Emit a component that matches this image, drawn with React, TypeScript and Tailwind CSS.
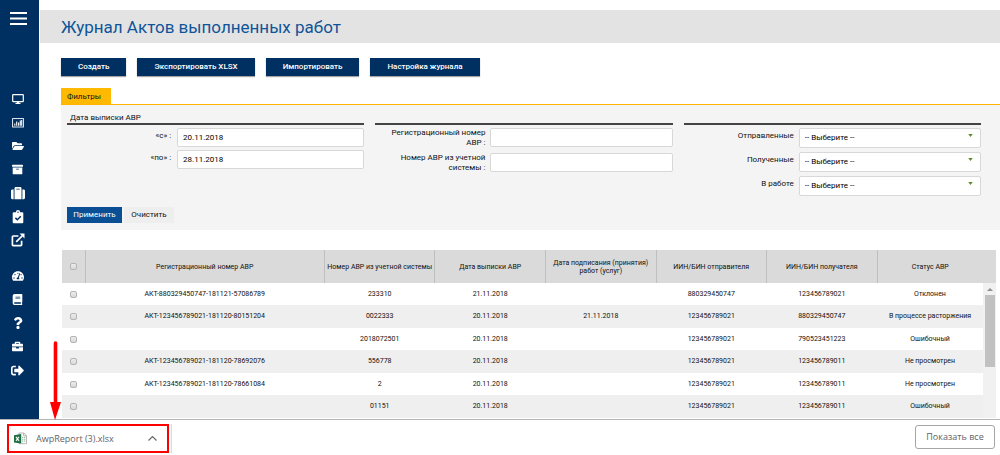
import type { ReactNode } from "react";
import {
  FaFolderOpen,
  FaArchive,
  FaSuitcase,
  FaTachometerAlt,
  FaBook,
  FaQuestion,
  FaBriefcase,
  FaSignOutAlt,
} from "react-icons/fa";

const rows = [
  ["АКТ-880329450747-181121-57086789", "233310", "21.11.2018", "", "880329450747", "123456789021", "Отклонен"],
  ["АКТ-123456789021-181120-80151204", "0022333", "20.11.2018", "21.11.2018", "123456789021", "880329450747", "В процессе расторжения"],
  ["", "2018072501", "20.11.2018", "", "123456789021", "790523451223", "Ошибочный"],
  ["АКТ-123456789021-181120-78692076", "556778", "20.11.2018", "", "123456789021", "123456789011", "Не просмотрен"],
  ["АКТ-123456789021-181120-78661084", "2", "20.11.2018", "", "123456789021", "123456789011", "Не просмотрен"],
  ["", "01151", "20.11.2018", "", "123456789021", "123456789011", "Ошибочный"],
];

const columns = [
  { title: "Регистрационный номер АВР", width: "w-[26%]" },
  { title: "Номер АВР из учетной системы", width: "w-[12%]" },
  { title: "Дата выписки АВР", width: "w-[12%]" },
  { title: "Дата подписания (принятия) работ (услуг)", width: "w-[12%]" },
  { title: "ИИН/БИН отправителя", width: "w-[12%]" },
  { title: "ИИН/БИН получателя", width: "w-[12%]" },
  { title: "Статус АВР", width: "" },
];

const MonitorIcon = () => (
  <svg viewBox="0 0 12 12" className="size-3" fill="none" stroke="currentColor">
    <rect x="0.7" y="1.7" width="10.6" height="7" rx="0.6" strokeWidth="1.2" />
    <path d="M3.5 10.4h5M5 9.4h2" strokeWidth="1.2" />
  </svg>
);

const ChartIcon = () => (
  <svg viewBox="0 0 12 12" className="size-3" fill="none" stroke="currentColor">
    <rect x="0.6" y="1.6" width="10.8" height="8.4" strokeWidth="0.9" />
    <path d="M2.8 8.8V6.6M4.7 8.8V4.6M6.6 8.8V5.6M8.3 8.8V3.6M9.7 8.8V3" strokeWidth="1.1" />
  </svg>
);

const ClipboardIcon = () => (
  <svg viewBox="0 0 12 14" className="h-3.5 w-3">
    <path
      fill="currentColor"
      d="M1.7 2.2h2.2a2.1 2.1 0 0 1 4.2 0h2.2q1 0 1 1v9q0 1-1 1H1.7q-1 0-1-1v-9q0-1 1-1z"
    />
    <circle cx="6" cy="2.3" r="0.7" fill="#003061" />
    <path d="M3.4 7.9l1.9 1.9 3.5-3.5" fill="none" stroke="#003061" strokeWidth="1.5" />
  </svg>
);

const ShareIcon = () => (
  <svg viewBox="0 0 14 14" className="size-3.5" fill="none" stroke="currentColor">
    <path d="M7.4 3H2.2q-.8 0-.8.8v8q0 .8.8.8h7.6q.8 0 .8-.8V7.8" strokeWidth="1.7" />
    <path d="M5.2 8.8l6-6" strokeWidth="1.7" />
    <path d="M8.6.6h4.9v4.9z" fill="currentColor" stroke="none" />
  </svg>
);

const ExcelIcon = () => (
  <svg viewBox="0 0 13 14" className="h-3.5 w-[13px] shrink-0">
    <path d="M5 1h4.8l2.7 2.7v8H5z" fill="#fff" stroke="#a5a5a5" strokeWidth="0.8" />
    <path d="M9.6 1v2.8h2.9" fill="none" stroke="#a5a5a5" strokeWidth="0.8" />
    <path d="M8 5.4h1.4M10 5.4h1.4M8 7.2h1.4M10 7.2h1.4M8 9h1.4M10 9h1.4" stroke="#7fb596" strokeWidth="0.9" />
    <path d="M0 3.2L7.2 2v9.4L0 10.4z" fill="#1d7044" />
    <path d="M2 4.9l3 3.9M5 4.9L2 8.8" stroke="#fff" strokeWidth="1.1" />
  </svg>
);

const mainNav: [string, ReactNode][] = [
  ["Рабочий стол", <MonitorIcon />],
  ["Статистика", <ChartIcon />],
  ["Документы", <FaFolderOpen className="size-3" />],
  ["Архив", <FaArchive className="size-[11px]" />],
  ["Склад", <FaSuitcase className="size-3.5" />],
  ["Акты", <ClipboardIcon />],
  ["Экспорт", <ShareIcon />],
];

const extraNav: [string, ReactNode][] = [
  ["Панель", <FaTachometerAlt className="size-3" />],
  ["Справочник", <FaBook className="size-[11px]" />],
  ["Помощь", <FaQuestion className="size-3" />],
  ["Профиль", <FaBriefcase className="size-[11px]" />],
  ["Выход", <FaSignOutAlt className="size-[13px]" />],
];

function NavGroup({ items, height }: { items: [string, ReactNode][]; height: string }) {
  return (
    <ul className={"flex flex-col justify-between " + height}>
      {items.map(([name, icon]) => (
        <li key={name}>
          <a href="#" aria-label={name} className="flex h-5 items-center justify-center pr-1">
            {icon}
          </a>
        </li>
      ))}
    </ul>
  );
}

function ActionButton({ children }: { children: string }) {
  return (
    <button className="h-[18px] bg-[#003061] px-[17px] text-[8px] leading-[18px] font-medium text-white shadow-[0_1px_1px_rgba(0,0,0,0.35)]">
      {children}
    </button>
  );
}

function Group({ title, children }: { title?: string; children: ReactNode }) {
  return (
    <section>
      <h2 className="h-[15px] border-b-2 border-[#444] px-[3px] text-[8px] leading-4">{title}</h2>
      {children}
    </section>
  );
}

const fieldBox =
  "w-full rounded-[2px] border border-[#d8d8d8] bg-white px-[5px] text-[8px] text-black";

function TextField({ id, label, value }: { id: string; label: string; value: string }) {
  return (
    <div className="grid grid-cols-[104fr_187fr] gap-1.5">
      <label htmlFor={id} className="pt-[3px] text-right leading-[10px]">
        {label}
      </label>
      <input id={id} defaultValue={value} className={fieldBox + " h-[19px]"} />
    </div>
  );
}

function WideTextField({ id, label }: { id: string; label: string }) {
  return (
    <div className="grid grid-cols-[110fr_182fr] gap-[5px]">
      <label htmlFor={id} className="pl-4 text-right leading-[10px]">
        {label}
      </label>
      <input id={id} className={fieldBox + " h-[19px]"} />
    </div>
  );
}

function SelectField({ id, label }: { id: string; label: string }) {
  return (
    <div className="grid grid-cols-[110fr_182fr] gap-[5px]">
      <label htmlFor={id} className="pt-[3px] text-right leading-[10px]">
        {label}
      </label>
      <div className="relative">
        <select id={id} className={fieldBox + " block h-5 appearance-none"}>
          <option>-- Выберите --</option>
        </select>
        <svg viewBox="0 0 6 4" className="pointer-events-none absolute top-1.5 right-2 h-[3px] w-[5px]">
          <path d="M0 0h6L3 4z" fill="#5c8a2c" />
        </svg>
      </div>
    </div>
  );
}

function Check({ label }: { label: string }) {
  return (
    <input
      type="checkbox"
      aria-label={label}
      className="mx-auto block size-[7px] appearance-none rounded-[2px] border border-[#b4b4b4] bg-linear-to-b from-[#ececec] to-[#d8d8d8]"
    />
  );
}

export default function App() {
  return (
    <div className="flex min-h-screen flex-col bg-white font-['Roboto','Liberation_Sans',sans-serif] text-[8px] text-[#111]">
      <div className="relative flex">
        <nav className="w-[39px] shrink-0 bg-[#003061] text-white">
          <button aria-label="Меню" className="mt-3 ml-2.5 block h-[13px] w-[17px]">
            <svg viewBox="0 0 17 13" className="h-[13px] w-[17px]">
              <path d="M0 1h17M0 6.5h17M0 12h17" stroke="#fff" strokeWidth="1.8" />
            </svg>
          </button>
          <div className="flex flex-col gap-4 pt-16">
            <NavGroup items={mainNav} height="h-[161px]" />
            <NavGroup items={extraNav} height="h-[114px]" />
          </div>
        </nav>

        <main className="min-w-0 flex-1 pt-2.5 pl-px">
          <h1 className="h-[33px] bg-[#e3e3e3] pl-[21px] text-[17px] leading-[34px] text-[#0f5499]">
            Журнал Актов выполненных работ
          </h1>

          <div className="pl-[21px]">
            <div className="mt-[15px] flex gap-[11px]">
              <ActionButton>Создать</ActionButton>
              <ActionButton>Экспортировать XLSX</ActionButton>
              <ActionButton>Импортировать</ActionButton>
              <ActionButton>Настройка журнала</ActionButton>
            </div>

            <div className="mt-3 flex border-b border-[#ffb400]">
              <button className="h-4 w-[50px] bg-[#ffb900] pt-px pl-1.5 text-left">Фильтры</button>
            </div>
            <form className="bg-[#f4f4f4] pt-[5px] pr-[19px] pb-[7px] pl-1.5" onSubmit={(e) => e.preventDefault()}>
              <div className="grid grid-cols-3 gap-[11px]">
                <Group title="Дата выписки АВР">
                  <div className="mt-[3px] flex flex-col gap-[3px]">
                    <TextField id="from" label="«с» :" value="20.11.2018" />
                    <TextField id="to" label="«по» :" value="28.11.2018" />
                  </div>
                </Group>
                <Group>
                  <div className="mt-[3px] flex flex-col gap-[5px]">
                    <WideTextField id="reg" label="Регистрационный номер АВР :" />
                    <WideTextField id="acc" label="Номер АВР из учетной системы :" />
                  </div>
                </Group>
                <Group>
                  <div className="mt-[3px] flex flex-col gap-1">
                    <SelectField id="sent" label="Отправленные" />
                    <SelectField id="received" label="Полученные" />
                    <SelectField id="work" label="В работе" />
                  </div>
                </Group>
              </div>
              <div className="mt-[11px] flex gap-0.5">
                <button className="h-4 w-[55px] bg-[#0a4f93] text-white">Применить</button>
                <button type="reset" className="h-4 w-[50px] bg-[#eee]">Очистить</button>
              </div>
            </form>

            <div className="mt-5 mr-1 ml-px flex pb-px">
              <table className="w-full flex-1 table-fixed border-collapse text-center text-[7px]">
                <thead className="bg-[#dadada]">
                  <tr className="h-[33px]">
                    <th className="w-[23px] border-r border-[#bfbfbf] p-0">
                      <Check label="Выбрать все" />
                    </th>
                    {columns.map((c) => (
                      <th
                        key={c.title}
                        className={c.width + " border-r border-[#bfbfbf] p-0 leading-2 font-normal last:border-r-0"}
                      >
                        {c.title}
                      </th>
                    ))}
                  </tr>
                </thead>
                <tbody>
                  {rows.map((row, i) => (
                    <tr key={i} className="h-[22px] even:h-[23px] even:bg-[#efefef]">
                      <td className="p-0">
                        <Check label={"Выбрать строку " + (i + 1)} />
                      </td>
                      {row.map((cell, j) => (
                        <td key={j} className="p-0 whitespace-nowrap">
                          {cell}
                        </td>
                      ))}
                    </tr>
                  ))}
                </tbody>
              </table>
              <div className="flex w-[13px] shrink-0 flex-col bg-[#f1f1f1]">
                <div className="h-[33px] bg-[#dadada]" />
                <svg viewBox="0 0 13 12" className="h-3 w-[13px]">
                  <path d="M4 8h6L7 5z" fill="#909090" />
                </svg>
                <div className="ml-0.5 h-[72px] w-2.5 bg-[#c1c1c1]" />
              </div>
            </div>
          </div>
        </main>

        <svg viewBox="0 0 12 79" className="pointer-events-none absolute -bottom-px left-[49px] h-[79px] w-3">
          <path d="M6.5 2v62" stroke="#f00" strokeWidth="3.6" strokeLinecap="round" />
          <path d="M1 61h11L6 79z" fill="#f00" />
        </svg>
      </div>

      <footer className="flex flex-1 items-start justify-between border-t border-[#b5b5b5] bg-white pt-1 pr-[5px] pl-[7px] font-['Open_Sans','Noto_Sans',sans-serif] text-[9px] text-[#5f6368]">
        <div className="flex items-center border-r border-[#ddd] pr-0.5">
          <button className="flex h-[29px] w-[162px] items-center border-2 border-[#f00] pr-2.5 pl-[5px]">
            <ExcelIcon />
            <span className="ml-[9px] flex-1 text-left">AwpReport (3).xlsx</span>
            <svg viewBox="0 0 9 5" className="h-[5px] w-[9px]">
              <path d="M0.5 4.5l4-4 4 4" fill="none" stroke="#666" strokeWidth="1.1" />
            </svg>
          </button>
        </div>
        <button className="mt-px h-6 w-20 rounded-[3px] border border-[#a5a5a5]">Показать все</button>
      </footer>
    </div>
  );
}
